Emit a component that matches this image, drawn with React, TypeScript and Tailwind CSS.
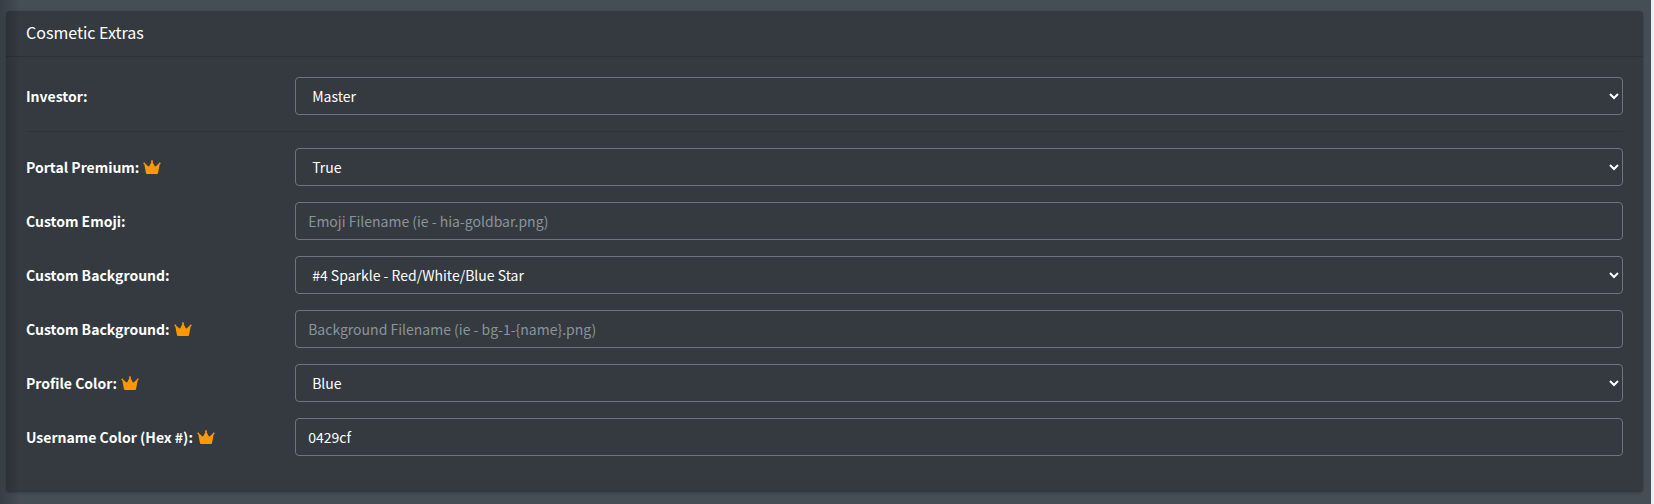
import type { ReactNode } from 'react';

const CONTROL =
  'block h-[38px] w-full rounded border border-[#6c757d] bg-[#343a40] px-3 text-[14px] leading-6 text-white outline-none focus:border-[#80bdff]';

interface FieldProps {
  id: string;
  label: string;
  premium?: boolean;
  children: ReactNode;
}

function CrownIcon() {
  return (
    <svg viewBox="0 0 18 14" className="ml-1 h-[14px] w-[18px] fill-[#ff9800]" aria-hidden="true">
      <path d="M4 14Q3.2 14 3 13.2L1.3 4.2A.9.9 0 1 1 2.1 3.5L5.2 6.2Q5.9 6.7 6.4 5.9L8.4 1.9A.95.95 0 1 1 9.6 1.9L11.6 5.9Q12.1 6.7 12.8 6.2L15.9 3.5A.9.9 0 1 1 16.7 4.2L15 13.2Q14.8 14 14 14Z" />
    </svg>
  );
}

function Field({ id, label, premium, children }: FieldProps) {
  return (
    <div className="mb-4 flex items-center">
      <label htmlFor={id} className="flex w-1/6 shrink-0 items-center text-[14px] leading-6 font-bold text-white">
        {label}
        {premium && <CrownIcon />}
      </label>
      <div className="min-w-0 flex-1 pl-[3px]">{children}</div>
    </div>
  );
}

function SelectInput({ id, options }: { id: string; options: string[] }) {
  return (
    <select id={id} defaultValue={options[0]} className={CONTROL}>
      {options.map((option) => (
        <option key={option}>{option}</option>
      ))}
    </select>
  );
}

function TextInput({ id, placeholder, value }: { id: string; placeholder?: string; value?: string }) {
  return (
    <input
      id={id}
      type="text"
      placeholder={placeholder}
      defaultValue={value}
      className={`${CONTROL} placeholder:text-[#8b939b]`}
    />
  );
}

export default function App() {
  return (
    <div className="relative flex min-h-screen border-r-[3px] border-[#f1eeee] bg-[#454d55] font-['Noto_Sans_CJK_JP','Noto_Sans_CJK_SC',sans-serif] scheme-dark">
      {/* shadow cast by the sidebar */}
      <div className="pointer-events-none absolute inset-y-0 left-0 w-5 bg-linear-to-r from-black/20 to-transparent" />
      <main className="min-w-0 flex-1 pt-[11px] pr-2 pl-[6px]">
        <section className="rounded bg-[#343a40] shadow-[0_0_1px_rgba(0,0,0,0.13),0_1px_3px_rgba(0,0,0,0.2)]">
          <header className="border-b border-black/15 px-5 pt-[10px] pb-3">
            <h3 className="text-base leading-[23px] text-white">Cosmetic Extras</h3>
          </header>
          <form className="p-5">
            <Field id="investor" label="Investor:">
              <SelectInput id="investor" options={['Master']} />
            </Field>
            <hr className="mb-4 border-black/10" />
            <Field id="premium" label="Portal Premium:" premium>
              <SelectInput id="premium" options={['True', 'False']} />
            </Field>
            <Field id="emoji" label="Custom Emoji:">
              <TextInput id="emoji" placeholder="Emoji Filename (ie - hia-goldbar.png)" />
            </Field>
            <Field id="background" label="Custom Background:">
              <SelectInput id="background" options={['#4 Sparkle - Red/White/Blue Star']} />
            </Field>
            <Field id="background-file" label="Custom Background:" premium>
              <TextInput id="background-file" placeholder="Background Filename (ie - bg-1-{name}.png)" />
            </Field>
            <Field id="profile-color" label="Profile Color:" premium>
              <SelectInput id="profile-color" options={['Blue']} />
            </Field>
            <Field id="username-color" label="Username Color (Hex #):" premium>
              <TextInput id="username-color" value="0429cf" />
            </Field>
          </form>
        </section>
      </main>
    </div>
  );
}
